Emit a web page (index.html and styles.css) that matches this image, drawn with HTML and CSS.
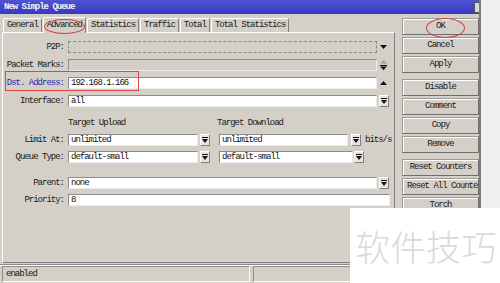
FILE: index.html
```html
<!DOCTYPE html>
<html lang="en">
<head>
  <meta charset="UTF-8">
  <title>New Simple Queue</title>
  <link rel="stylesheet" href="styles.css">
</head>
<body>
<div class="window">
  <div class="titlebar">
    <span>New Simple Queue</span>
    <span class="close"></span>
  </div>

  <div class="main">
    <div class="left">
      <div class="tabs">
        <div class="tab">General</div>
        <div class="tab active">Advanced</div>
        <div class="tab">Statistics</div>
        <div class="tab">Traffic</div>
        <div class="tab">Total</div>
        <div class="tab">Total Statistics</div>
      </div>

      <div class="panel">
        <div class="group first">
          <div class="row">
            <label>P2P:</label>
            <div class="field full dotted"></div>
            <span class="icon"><svg width="7" height="4" viewBox="0 0 7 4"><path d="M0 0h7L3.5 4z" fill="#111"/></svg></span>
          </div>
          <div class="row">
            <label>Packet Marks:</label>
            <div class="field full disabled"></div>
            <span class="icon"><svg width="7" height="10" viewBox="0 0 7 10"><path d="M3.5 0L7 3.5H0z" fill="#a0a0a0"/><path d="M0 5h7v1H0zM0 6.5h7L3.5 10z" fill="#111"/></svg></span>
          </div>
          <div class="row">
            <label class="blue">Dst. Address:</label>
            <div class="field full">192.168.1.166</div>
            <span class="icon"><svg width="7" height="4" viewBox="0 0 7 4"><path d="M3.5 0L7 4H0z" fill="#111"/></svg></span>
          </div>
          <div class="row">
            <label>Interface:</label>
            <div class="field full">all</div>
            <span class="icon"><span class="drop"><svg width="6" height="6" viewBox="0 0 6 6"><path d="M0 0h6v1H0zM0 2h6L3 6z" fill="#111"/></svg></span></span>
          </div>
        </div>

        <div class="group limits">
          <div class="heads">
            <span class="head">Target Upload</span>
            <span>Target Download</span>
          </div>
          <div class="row">
            <label>Limit At:</label>
            <div class="field half">unlimited</div>
            <span class="drop"><svg width="6" height="6" viewBox="0 0 6 6"><path d="M0 0h6v1H0zM0 2h6L3 6z" fill="#111"/></svg></span>
            <div class="field half second">unlimited</div>
            <span class="drop"><svg width="6" height="6" viewBox="0 0 6 6"><path d="M0 0h6v1H0zM0 2h6L3 6z" fill="#111"/></svg></span>
            <span class="unit">bits/s</span>
          </div>
          <div class="row">
            <label>Queue Type:</label>
            <div class="field half">default-small</div>
            <span class="drop"><svg width="6" height="6" viewBox="0 0 6 6"><path d="M0 0h6v1H0zM0 2h6L3 6z" fill="#111"/></svg></span>
            <div class="field half second wide">default-small</div>
            <span class="drop"><svg width="6" height="6" viewBox="0 0 6 6"><path d="M0 0h6v1H0zM0 2h6L3 6z" fill="#111"/></svg></span>
          </div>
        </div>

        <div class="group last">
          <div class="row">
            <label>Parent:</label>
            <div class="field full">none</div>
            <span class="icon"><span class="drop"><svg width="6" height="6" viewBox="0 0 6 6"><path d="M0 0h6v1H0zM0 2h6L3 6z" fill="#111"/></svg></span></span>
          </div>
          <div class="row">
            <label>Priority:</label>
            <div class="field longest">8</div>
          </div>
        </div>
      </div>
    </div>

    <div class="buttons">
      <div class="btn-group">
        <div class="btn">OK</div>
        <div class="btn">Cancel</div>
        <div class="btn">Apply</div>
      </div>
      <div class="btn-group">
        <div class="btn">Disable</div>
        <div class="btn">Comment</div>
        <div class="btn">Copy</div>
        <div class="btn">Remove</div>
      </div>
      <div class="btn-group">
        <div class="btn">Reset Counters</div>
        <div class="btn tight">Reset All Counte</div>
        <div class="btn">Torch</div>
      </div>
    </div>
  </div>

  <div class="statusbar">
    <div class="status">enabled</div>
    <div class="status rest"></div>
  </div>
</div>
<div class="strip"></div>

<!-- annotations drawn over the screenshot -->
<div class="mark mark-tab"></div>
<div class="mark mark-ok"></div>
<div class="mark mark-dst"></div>
<div class="watermark">软件技巧</div>
</body>
</html>
```

FILE: styles.css
```css
body {
  margin: 0;
  width: 500px;
  height: 283px;
  overflow: hidden;
  display: flex;
  background: #efefef;
  font-family: "Liberation Mono", monospace;
  font-size: 9px;
  letter-spacing: -1px;
  color: #1a1a1a;
}
.window {
  width: 479px;
  height: 283px;
  border-right: 2px solid #7c7c7c;
  background: #d4d0c8;
  display: flex;
  flex-direction: column;
}
.strip {
  flex: 1;
  background: #efefef;
}
.titlebar {
  height: 14px;
  display: flex;
  align-items: center;
  justify-content: space-between;
  padding-left: 4px;
  background: linear-gradient(#5153d2, #3639c4);
  color: #f2f2f2;
  font-weight: bold;
}
.close {
  width: 4px;
  height: 9px;
  border: 1px solid #555;
  border-right: none;
  background: #d8d8d8;
}
.main {
  height: 250px;
  display: flex;
}
.left {
  width: 393px;
  padding-left: 2px;
  display: flex;
  flex-direction: column;
}
.tabs {
  display: flex;
  margin-top: 3px;
  margin-left: 1px;
  height: 15px;
  align-items: flex-end;
}
.tab {
  height: 13px;
  line-height: 13px;
  padding: 0 3px;
  border: 1px solid #fff;
  border-bottom: none;
  border-right-color: #808080;
  border-radius: 2px 2px 0 0;
  margin-right: 1px;
}
.tab.active {
  height: 15px;
  line-height: 15px;
  margin-bottom: -1px;
  background: #d4d0c8;
  position: relative;
}
.panel {
  flex: 1;
  margin-bottom: 1px;
  border: 1px solid #fff;
  border-right-color: #808080;
  border-bottom-color: #808080;
}
.group {
  display: flex;
  flex-direction: column;
}
.group.first {
  gap: 6px;
  padding-top: 8px;
}
.group.limits {
  margin-top: 10px;
  gap: 5px;
}
.group.last {
  margin-top: 14px;
  gap: 5px;
}
.row {
  display: flex;
  align-items: center;
  height: 12px;
}
label {
  width: 61px;
  margin-right: 4px;
  text-align: right;
}
label.blue {
  color: #2a2ab0;
}
.field {
  height: 10px;
  line-height: 10px;
  padding-left: 2px;
  background: #fff;
  border: 1px solid;
  border-color: #8c8c8c #ececec #ececec #8c8c8c;
  color: #111;
}
.field.full {
  width: 305px;
}
.field.longest {
  width: 318px;
}
.field.dotted {
  background: #d4d0c8;
  border: 1px dashed #8a8a8a;
}
.field.disabled {
  background: #d4d0c8;
}
.icon {
  width: 13px;
  display: flex;
  justify-content: center;
}
.drop {
  width: 8px;
  height: 10px;
  display: flex;
  align-items: center;
  justify-content: center;
  background: #e6e4de;
  border: 1px solid;
  border-color: #fff #808080 #808080 #fff;
}
.field.half {
  width: 126px;
  margin-right: 2px;
}
.field.second {
  margin-left: 9px;
  width: 125px;
  margin-right: 3px;
}
.field.second.wide {
  width: 130px;
  margin-right: 1px;
}
.unit {
  margin-left: 4px;
}
.heads {
  display: flex;
  height: 12px;
  line-height: 12px;
  padding-left: 65px;
}
.head {
  width: 149px;
}
.buttons {
  width: 77px;
  margin-left: 7px;
  padding-top: 4px;
  display: flex;
  flex-direction: column;
  gap: 6px;
}
.btn-group {
  display: flex;
  flex-direction: column;
  gap: 2px;
}
.btn {
  height: 15px;
  line-height: 15px;
  padding: 0 6px;
  border: 1px solid;
  border-color: #9a9a9a #6e6e6e #6e6e6e #9a9a9a;
  box-shadow: inset 1px 1px #fff;
  text-align: center;
  white-space: nowrap;
}
.btn.tight {
  padding: 0 0 0 4px;
  text-align: left;
}
.statusbar {
  height: 17px;
  border-top: 1px solid #8a8a8a;
  box-shadow: inset 0 1px #fff;
  padding: 1px 0 0 2px;
  display: flex;
  gap: 3px;
}
.status {
  width: 243px;
  height: 14px;
  line-height: 14px;
  padding-left: 3px;
  border: 1px solid;
  border-color: #8c8c8c #fff #fff #8c8c8c;
}
.status.rest {
  flex: 1;
  width: auto;
}
.mark {
  position: absolute;
  border: 1px solid #d04040;
}
.mark-tab {
  left: 44px;
  top: 19px;
  width: 39px;
  height: 13px;
  border-radius: 50%;
}
.mark-ok {
  left: 426px;
  top: 18px;
  width: 37px;
  height: 18px;
  border-radius: 50%;
}
.mark-dst {
  left: 5px;
  top: 71px;
  width: 132px;
  height: 18px;
  border: 1.5px solid #e04444;
}
.watermark {
  position: absolute;
  left: 350px;
  top: 208px;
  width: 145px;
  height: 55px;
  padding: 20px 0 0 5px;
  background: #fff;
  font-family: "Noto Sans CJK SC", sans-serif;
  font-size: 35px;
  font-weight: 300;
  line-height: 35px;
  letter-spacing: 0.5px;
  color: #dadada;
}
```
